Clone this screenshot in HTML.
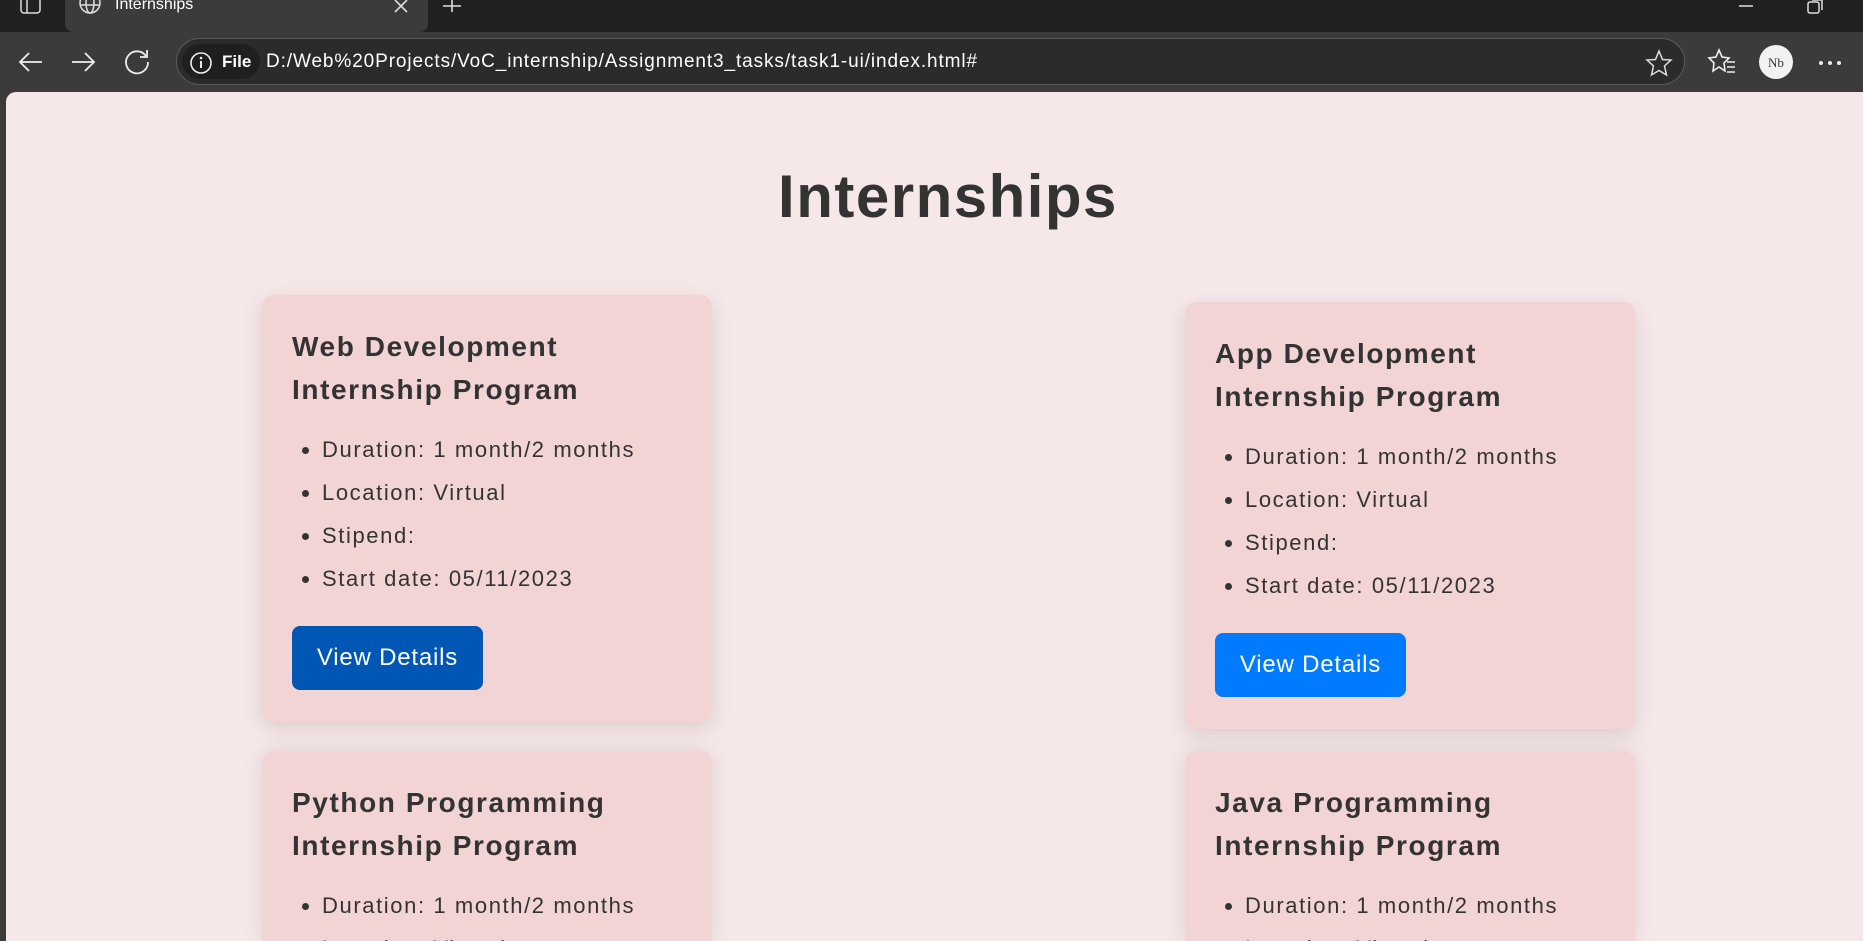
<!DOCTYPE html>
<html style="width:1863px;height:941px;overflow:hidden"><head><meta charset="utf-8">
<style>
*{box-sizing:border-box;margin:0;padding:0}
body{width:1863px;height:941px;overflow:hidden;background:#3b3b3b;font-family:"Liberation Sans",sans-serif;position:relative}
.tabbar{position:absolute;left:0;top:0;width:1863px;height:32px;background:#202020}
.tab{position:absolute;left:65px;top:0;width:363px;height:32px;background:#3b3b3b;border-radius:0 0 8px 8px}
.tab span{position:absolute;left:50px;top:-4px;color:#fff;font-size:16px}
.toolbar{position:absolute;top:32px;left:0;width:1863px;height:60px;background:#3b3b3b}
.addr{position:absolute;left:176px;top:6px;width:1509px;height:47px;border:1px solid #5a5a5a;border-radius:24px;background:#2b2b2b}
.file{position:absolute;left:5px;top:5px;width:78px;height:35px;border-radius:18px;background:#1f1f1f;color:#fff;font-weight:bold;font-size:17px;line-height:35px;padding-left:40px}
.url{position:absolute;left:89px;top:0;line-height:45px;color:#fff;font-size:19px;letter-spacing:0.9px}
.page{position:absolute;left:6px;top:92px;width:1857px;height:849px;background:#f6e8e8;border-top-left-radius:10px;overflow:hidden}
h1{position:absolute;left:0;width:1884px;top:70px;text-align:center;font-size:60px;color:#333;font-weight:bold;line-height:70px;letter-spacing:1.5px}
.card{position:absolute;width:450px;height:427px;background:#f2d4d4;border-radius:12px;box-shadow:0 6px 20px rgba(0,0,0,0.12);padding:30px;overflow:hidden}
.card.b{height:190px;border-radius:12px 12px 0 0;box-shadow:0 0 20px rgba(0,0,0,0.10)}
.card h2{font-size:28px;line-height:43px;color:#333;font-weight:bold;letter-spacing:1.6px;white-space:nowrap}
.card ul{margin-top:17px;padding-left:30px;color:#333;font-size:22px;line-height:43px;letter-spacing:1.6px;white-space:nowrap}
.btn{display:inline-block;margin-top:26px;width:191px;height:64px;border-radius:8px;background:#007bff;color:#fff;font-size:24px;line-height:64px;text-align:center;letter-spacing:0.8px}
svg{position:absolute}
</style></head><body>
<div class="tabbar">
<svg style="left:20px;top:0" width="22" height="14"><rect x="1" y="-4" width="19" height="17" rx="3" fill="none" stroke="#ddd" stroke-width="1.5"/><line x1="7" y1="0" x2="7" y2="13" stroke="#ddd" stroke-width="1.5"/></svg>
<div class="tab"><svg style="left:13px;top:0" width="24" height="16"><circle cx="12" cy="3" r="10" fill="none" stroke="#ddd" stroke-width="1.5"/><ellipse cx="12" cy="3" rx="4" ry="10" fill="none" stroke="#ddd" stroke-width="1.5"/><line x1="2" y1="5" x2="22" y2="5" stroke="#ddd" stroke-width="1.5"/></svg><span>Internships</span>
<svg style="left:328px;top:0" width="16" height="14"><path d="M2 0L14 12M14 0L2 12" stroke="#ddd" stroke-width="1.6"/></svg></div>
<svg style="left:442px;top:0" width="20" height="14"><path d="M10 0V12M1 6H19" stroke="#ddd" stroke-width="1.6"/></svg>
<svg style="left:1738px;top:0" width="16" height="14"><path d="M1 6H15" stroke="#ddd" stroke-width="1.5"/></svg>
<svg style="left:1806px;top:0" width="18" height="16"><rect x="2" y="2" width="11" height="11" rx="2" fill="none" stroke="#ddd" stroke-width="1.5"/><path d="M6 0H16V10" fill="none" stroke="#ddd" stroke-width="1.5"/></svg>
</div>
<div class="toolbar">
<svg style="left:16px;top:16px" width="28" height="28"><path d="M26 14H4M13 5L4 14L13 23" fill="none" stroke="#eee" stroke-width="1.8"/></svg>
<svg style="left:70px;top:16px" width="28" height="28"><path d="M2 14H24M15 5L24 14L15 23" fill="none" stroke="#eee" stroke-width="1.8"/></svg>
<svg style="left:124px;top:16px" width="28" height="28"><path d="M22 8A11 11 0 1 0 24 14" fill="none" stroke="#eee" stroke-width="1.8"/><path d="M23 2V9H16" fill="none" stroke="#eee" stroke-width="1.8"/></svg>
<div class="addr"><div class="file">File</div>
<svg style="left:12px;top:12px" width="24" height="24"><circle cx="12" cy="12" r="10" fill="none" stroke="#eee" stroke-width="1.6"/><path d="M12 10V17" stroke="#eee" stroke-width="2"/><circle cx="12" cy="7" r="1.3" fill="#eee"/></svg>
<div class="url">D:/Web%20Projects/VoC_internship/Assignment3_tasks/task1-ui/index.html#</div>
<svg style="left:1468px;top:10px" width="28" height="28"><path d="M14 2L17.5 10.5L26 11L19.5 17L21.5 26L14 21.5L6.5 26L8.5 17L2 11L10.5 10.5Z" fill="none" stroke="#ddd" stroke-width="1.5"/></svg>
</div>
<svg style="left:1707px;top:16px" width="30" height="28"><path d="M12 2L15 9L22 10L17 15L18 23L12 19L6 23L7 15L2 10L9 9Z" fill="none" stroke="#eee" stroke-width="1.6"/><path d="M20 14H28M20 19H28M20 24H28" stroke="#eee" stroke-width="1.6"/></svg>
<svg style="left:1758px;top:12px" width="36" height="36"><circle cx="18" cy="18" r="17" fill="#f2f2f2"/><text x="18" y="23" font-size="13" text-anchor="middle" fill="#333" font-family="Liberation Serif">Nb</text></svg>
<svg style="left:1818px;top:28px" width="24" height="6"><circle cx="3" cy="3" r="2" fill="#eee"/><circle cx="12" cy="3" r="2" fill="#eee"/><circle cx="21" cy="3" r="2" fill="#eee"/></svg>
</div>
<div class="page">
<h1>Internships</h1>
<div class="card" style="left:256px;top:203px"><h2>Web Development<br>Internship Program</h2><ul><li>Duration: 1 month/2 months</li><li>Location: Virtual</li><li>Stipend:</li><li>Start date: 05/11/2023</li></ul><div class="btn" style="background:#0056b3">View Details</div></div>
<div class="card" style="left:1179px;top:210px"><h2>App Development<br>Internship Program</h2><ul><li>Duration: 1 month/2 months</li><li>Location: Virtual</li><li>Stipend:</li><li>Start date: 05/11/2023</li></ul><div class="btn">View Details</div></div>
<div class="card b" style="left:256px;top:659px"><h2>Python Programming<br>Internship Program</h2><ul><li>Duration: 1 month/2 months</li><li>Location: Virtual</li></ul></div>
<div class="card b" style="left:1179px;top:659px"><h2>Java Programming<br>Internship Program</h2><ul><li>Duration: 1 month/2 months</li><li>Location: Virtual</li></ul></div>
</div>
</body></html>
